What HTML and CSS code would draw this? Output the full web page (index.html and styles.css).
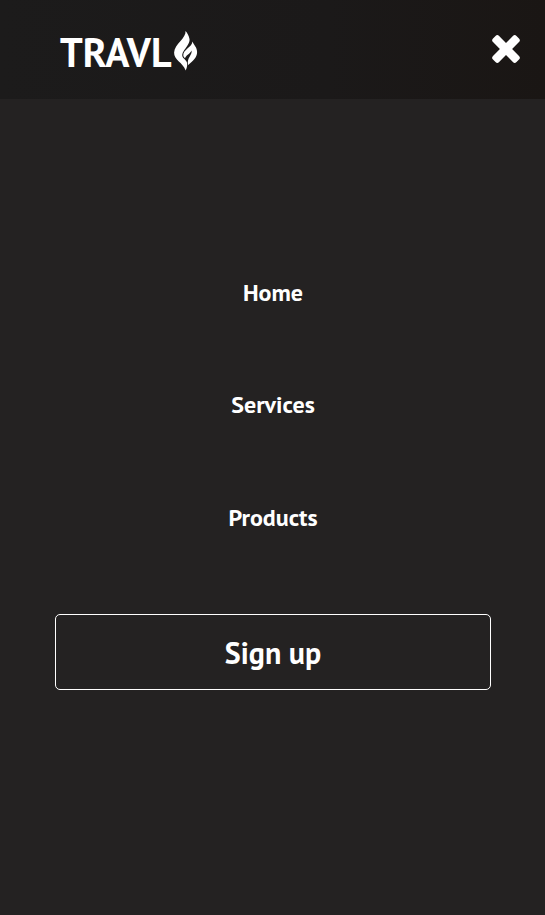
FILE: index.html
```html
<!DOCTYPE html>
<html lang="en">
<head>
<meta charset="utf-8">
<title>TRAVL</title>
<link rel="stylesheet" href="styles.css">
</head>
<body>
<header class="navbar">
  <a class="logo"><span class="logo-text">TRAVL</span><svg class="flame" viewBox="0 0 24 40"><path d="M12 0C13 7 1 13 .6 21.5C.3 29 9 31 12.2 39.5C15.5 32 13 30 9.8 27C5.5 21 17 15 16 8C15.3 4.5 13.8 2 12 0Z"/><path d="M18.8 10.5C19 16 9.3 18.5 9.8 24.5C10 26 11 26.8 11.5 27.3C12.5 24 16.5 23 18 19.5C19.2 24 13 26.5 14.6 34C19.5 30 23.6 26.5 23.6 21C23.6 16.5 20.5 14 18.8 10.5Z"/></svg></a>
  <button class="close" aria-label="Close menu"><svg viewBox="0 0 30 30"><path d="M2 4.5L4.5 2Q6.3.2 8.1 2L15 8.9L21.9 2Q23.7.2 25.5 2L28 4.5Q29.8 6.3 28 8.1L21.1 15L28 21.9Q29.8 23.7 28 25.5L25.5 28Q23.7 29.8 21.9 28L15 21.1L8.1 28Q6.3 29.8 4.5 28L2 25.5Q.2 23.7 2 21.9L8.9 15L2 8.1Q.2 6.3 2 4.5Z"/></svg></button>
</header>
<main class="menu">
  <a class="link">Home</a>
  <a class="link">Services</a>
  <a class="link">Products</a>
  <a class="signup">Sign up</a>
</main>
</body>
</html>
```
FILE: styles.css
```css
* { box-sizing: border-box; }
body {
  margin: 0;
  height: 915px;
  overflow: hidden;
  background: #242222;
  color: #fff;
  font-family: "PT Sans", "Open Sans", sans-serif;
  font-weight: 700;
}
.navbar {
  height: 99px;
  padding: 0 24px 0 60px;
  display: flex;
  justify-content: space-between;
  background: linear-gradient(90deg, #1c1b1b 0%, #1b1919 60%, #1a1614 100%);
}
.logo { display: flex; }
.logo-text {
  width: 112px;
  font-size: 40px;
  line-height: 104px;
  white-space: nowrap;
}
.flame { width: 25px; height: 40px; margin: 31px 0 0 1px; fill: #fff; }
.close { width: 30px; height: 30px; margin: 34px 0 0; padding: 0; border: 0; background: none; }
.close svg { display: block; width: 30px; height: 30px; fill: #fff; }
.menu { padding: 138px 54px 0 55px; display: flex; flex-direction: column; }
.link { height: 112.25px; line-height: 112px; font-size: 24px; text-align: center; }
.signup {
  height: 76px;
  margin-top: 40.25px;
  border: 1px solid #fff;
  border-radius: 5px;
  font-size: 30px;
  line-height: 76px;
  text-align: center;
}
```
